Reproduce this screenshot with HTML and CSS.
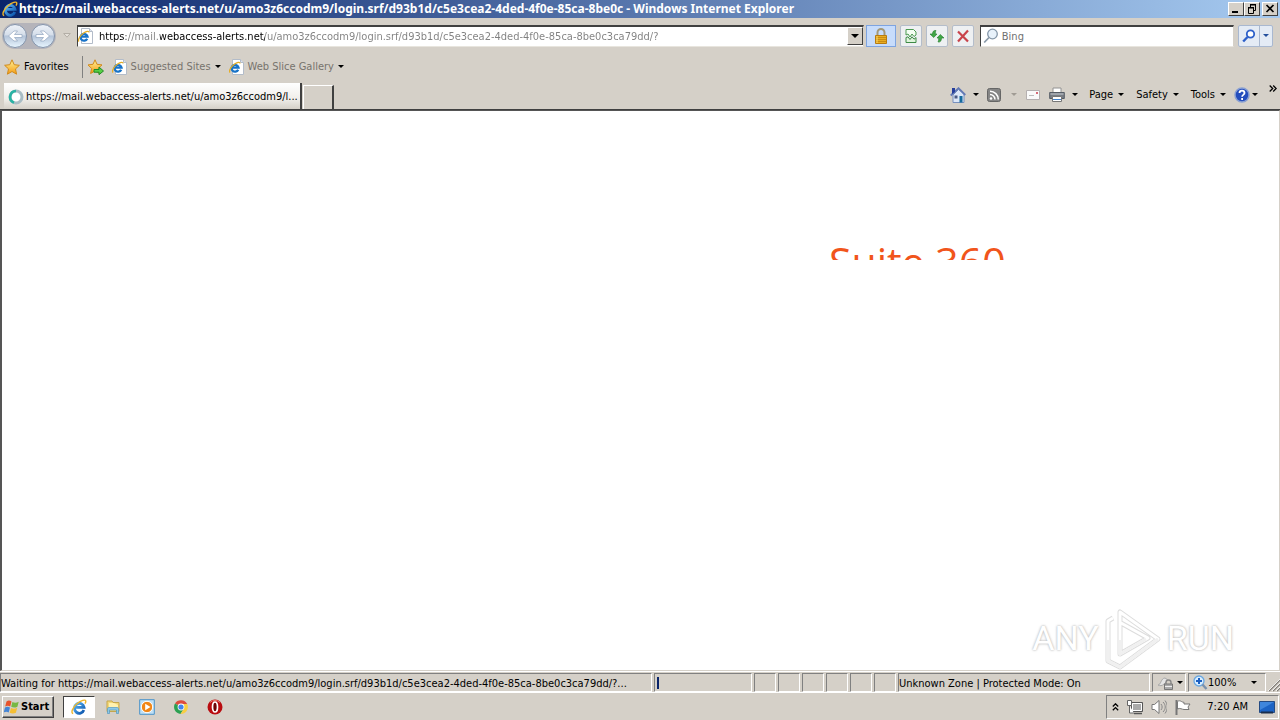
FILE: index.html
```html
<!DOCTYPE html>
<html lang="en">
<head>
<meta charset="utf-8">
<title>Windows Internet Explorer</title>
<link rel="stylesheet" href="styles.css">
</head>
<body>
<svg class="defs" width="0" height="0" aria-hidden="true">
  <defs>
    <linearGradient id="orb" x1="0" y1="0" x2="0" y2="1"><stop offset="0" stop-color="#eef2f8"/><stop offset=".45" stop-color="#d5deea"/><stop offset=".5" stop-color="#b4c4d9"/><stop offset="1" stop-color="#e8f6ff"/></linearGradient>
    <linearGradient id="gold" x1="0" y1="0" x2="0" y2="1"><stop offset="0" stop-color="#fff39a"/><stop offset="1" stop-color="#f59a10"/></linearGradient>
    <linearGradient id="blue" x1="0" y1="0" x2="1" y2="1"><stop offset="0" stop-color="#5cb8f4"/><stop offset="1" stop-color="#0b53ac"/></linearGradient>
    <symbol id="e" viewBox="0 0 16 16"><path d="M12.800 11A4.800 5 0 1 1 13 8.300H4.500" fill="none" stroke="url(#blue)" stroke-width="2.800"/><path d="M2.200 14.500C-.5 14 1.500 8.500 6 4.800 10 1.300 14.500.1 14.800 2c.1.900-.3 1.800-.8 2.600" fill="none" stroke="#efb52a" stroke-width="1.400"/></symbol>
    <symbol id="epage" viewBox="0 0 16 16"><path d="M3.500.5h8l3 3v12h-11z" fill="#fff" stroke="#b3bcc9"/><path d="M11.500.5v3h3" fill="#dde4ef" stroke="#b3bcc9"/><path d="M9.200 10.800A3.500 3.400 0 1 1 9.500 8.600H3" fill="none" stroke="#1873c8" stroke-width="2.300"/><path d="M1 13.500C-.5 12 2 7.500 5 5.500 8 3.200 11 2.500 11 4.500" fill="none" stroke="#e5ae27" stroke-width="1.300"/></symbol>
    <symbol id="star" viewBox="0 0 16 16"><path d="M8 .8l2.200 4.900 5.200.6-3.900 3.600 1.100 5.300L8 12.500l-4.600 2.700 1.100-5.300L.6 6.300l5.200-.6z" fill="url(#gold)" stroke="#d08a1c"/></symbol>
  </defs>
</svg>

<header class="titlebar">
  <svg class="i16"><use href="#e"/></svg>
  <h1>https://mail.webaccess-alerts.net/u/amo3z6ccodm9/login.srf/d93b1d/c5e3cea2-4ded-4f0e-85ca-8be0c - Windows Internet Explorer</h1>
  <div class="winbtns">
    <button aria-label="Minimize"><svg viewBox="0 0 14 12"><path d="M3 9h6" stroke="#000" stroke-width="2"/></svg></button>
    <button aria-label="Restore"><svg viewBox="0 0 14 12"><path d="M5 2h6M5 1.500h6M5.500 1v4M10.500 1v6.500H9M3 4.500h6M3.500 4v6.500h5V4M3 5h6" fill="none" stroke="#000"/></svg></button>
    <button class="close" aria-label="Close"><svg viewBox="0 0 14 12"><path d="M3.500 2l7 7M10.500 2l-7 7" stroke="#000" stroke-width="1.700"/></svg></button>
  </div>
</header>

<div class="addressrow">
  <div class="nav">
    <button aria-label="Back"><svg viewBox="0 0 26 26"><circle cx="13" cy="13" r="11.500" fill="url(#orb)" stroke="#8494ab"/><path d="M20 11.500h-7.500l3-3.500H12l-5.500 5 5.500 5h3.500l-3-3.500H20z" fill="#fff" stroke="#91a5bf" stroke-width=".7"/></svg></button>
    <button aria-label="Forward"><svg viewBox="0 0 26 26"><circle cx="13" cy="13" r="11.500" fill="url(#orb)" stroke="#8494ab"/><path d="M6 11.500h7.500l-3-3.500H14l5.500 5-5.500 5h-3.500l3-3.500H6z" fill="#fff" stroke="#91a5bf" stroke-width=".7"/></svg></button>
  </div>
  <button class="recent" aria-label="Recent pages"><svg viewBox="0 0 8 5"><path d="M.7.5h6.600L4 4.200z" fill="#e5e1da" stroke="#b3aea6"/></svg></button>
  <div class="field address">
    <svg class="i16"><use href="#epage"/></svg>
    <input class="url" type="text" aria-label="Address" value="https://mail.webaccess-alerts.net/u/amo3z6ccodm9/login.srf/d93b1d/c5e3cea2-4ded-4f0e-85ca-8be0c3ca79dd/?">
    <button class="drop" aria-label="Show addresses"><i class="arrow"></i></button>
  </div>
  <button class="lock" aria-label="Security report"><svg viewBox="0 0 18 18"><path d="M5.500 9V5.500a3.500 3.500 0 0 1 7 0V9" fill="none" stroke="#a39878" stroke-width="2"/><path d="M3.500 8.500h11v8h-11z" fill="#e9ad22" stroke="#b87b0e"/><path d="M4 10.500h10M4 12.500h10M4 14.500h10" stroke="#c98b12"/><path d="M5 9v7" stroke="#f9d96b"/></svg></button>
  <div class="tools">
    <button aria-label="Compatibility View"><svg viewBox="0 0 16 16"><path d="M3 7V1.500h7.500L13 4v3l-2 1.500L9 6 7 9 5 6z" fill="#f4fff2" stroke="#4a9a50"/><path d="M3 9.500v5h10v-5l-2 1.700L9 8.800 7 11.500 5 8.800z" fill="#dff5dc" stroke="#3d8a45"/></svg></button>
    <button aria-label="Refresh"><svg viewBox="0 0 16 16"><path d="M7 2.500C4.500 2 3.500 4 3.500 6H1l3.700 3.500L8 6H6.300c0-1.500 0-2.500.7-3.500z" fill="#42a747" stroke="#247a2c" stroke-width=".6"/><path d="M9 14c2.500.5 3.500-1.500 3.500-4H15l-3.700-3.500L8 10h1.700c0 1.700 0 3-.7 4z" fill="#42a747" stroke="#247a2c" stroke-width=".6"/></svg></button>
    <button aria-label="Stop"><svg viewBox="0 0 16 16"><path d="M3 3.500l10 10M13 2.500L3 13.500" stroke="#c9434b" stroke-width="2.200"/></svg></button>
  </div>
  <div class="field search">
    <svg class="i16" viewBox="0 0 16 16"><circle cx="9.500" cy="6" r="4.800" fill="#e8f2fb" stroke="#8597a9" stroke-width="1.300"/><path d="M6 9.500l-4.800 5" stroke="#8a99a8" stroke-width="1.800"/></svg>
    <input type="text" aria-label="Search" placeholder="Bing">
  </div>
  <div class="go">
    <button aria-label="Search the web"><svg viewBox="0 0 16 16"><circle cx="9.500" cy="6" r="3.700" fill="#fff" stroke="#2c5fc9" stroke-width="1.800"/><path d="M6.500 9l-4.300 4.500" stroke="#2c5fc9" stroke-width="2.400"/></svg></button>
    <button class="more" aria-label="Search options"><i class="arrow navy"></i></button>
  </div>
</div>

<nav class="favorites">
  <button class="fav"><svg class="i16"><use href="#star"/></svg>Favorites</button>
  <button class="addfav" aria-label="Add to Favorites Bar"><svg class="i16" viewBox="0 0 16 16"><path d="M7 .8l2 4.500 5 .6-3.700 3.400 1 5L7 12l-4.400 2.500 1-5L0 5.900l5-.6z" fill="url(#gold)" stroke="#d08a1c"/><path d="M6 10.500h5V8l4.500 4-4.500 3.700v-2.500H6z" fill="#57cf45" stroke="#238a27"/></svg></button>
  <button class="site"><svg class="i16"><use href="#epage"/></svg>Suggested Sites<i class="arrow"></i></button>
  <button class="site"><svg class="i16"><use href="#epage"/></svg>Web Slice Gallery<i class="arrow"></i></button>
</nav>

<div class="tabrow">
  <button class="tab"><svg class="i16" viewBox="0 0 16 16"><circle cx="8" cy="8" r="6" fill="#fff" stroke="#a8bcc4" stroke-width="3"/><path d="M8 2a6 6 0 0 0-2 11.600" fill="none" stroke="#29b3a4" stroke-width="2.600"/></svg><span>https://mail.webaccess-alerts.net/u/amo3z6ccodm9/l...</span></button>
  <button class="newtab" aria-label="New Tab"></button>
  <div class="commands">
    <button class="home" aria-label="Home"><svg class="i16" viewBox="0 0 16 16"><path d="M3 8v7.500h11V7L8.500 2.500z" fill="#dce7f8" stroke="#7890be"/><path d="M.7 8.500L8.500 1.200 15.300 8" fill="none" stroke="#6379b4" stroke-width="1.800"/><path d="M2 1h3v4l-3 2z" fill="#263f9c"/><path d="M4.500 8.500h3v3h-3z" fill="#4a5a85"/><path d="M9.500 9h3v6.500h-3z" fill="#156a9d"/></svg><i class="arrow"></i></button>
    <button class="feeds" aria-label="Feeds"><svg class="i16" viewBox="0 0 16 16"><rect x="1.500" y="1.500" width="13" height="13" rx="2" fill="#858585" stroke="#666"/><circle cx="5" cy="11.500" r="1.300" fill="#fff"/><path d="M4 7.500a5 5 0 0 1 5 5M4 4.200a8.300 8.300 0 0 1 8.300 8.300" fill="none" stroke="#fff" stroke-width="1.500"/></svg><i class="arrow dim"></i></button>
    <button class="mail" aria-label="Read mail"><svg class="i16" viewBox="0 0 16 16"><path d="M1.500 3.500h13v9h-13z" fill="#fafafa" stroke="#b5b0b0"/><path d="M11 5h2v2h-2z" fill="#d66b77"/><path d="M4 8.500h5" stroke="#bbb"/></svg></button>
    <button class="print" aria-label="Print"><svg class="i16" viewBox="0 0 16 16"><path d="M4 6V1h8v5" fill="#fff" stroke="#929292"/><path d="M.7 5.500h14.600v6H.7z" fill="#777d85" stroke="#555c65"/><path d="M1.500 7h13" stroke="#c9cdd1"/><path d="M3.500 9.500h9v5h-9z" fill="#fff" stroke="#777"/><path d="M4 12.500h8" stroke="#4183ce"/></svg><i class="arrow"></i></button>
    <button class="page">Page<i class="arrow"></i></button>
    <button class="safety">Safety<i class="arrow"></i></button>
    <button class="tool">Tools<i class="arrow"></i></button>
    <button class="help" aria-label="Help"><svg class="i16" viewBox="0 0 16 16"><circle cx="8" cy="8" r="7" fill="#254ebd" stroke="#8aa0d2" stroke-width="1.500"/><path d="M5.500 6c0-3.200 5-3.200 5 0 0 1.900-2.400 1.800-2.400 3.700M8.100 11v2" fill="none" stroke="#fff" stroke-width="1.800"/></svg><i class="arrow"></i></button>
    <button class="chevron" aria-label="More commands"><svg viewBox="0 0 8 7"><path d="M.7.5l3 3-3 3M4.200.5l3 3-3 3" fill="none" stroke="#000" stroke-width="1.300"/></svg></button>
  </div>
</div>

<main class="view">
  <div class="brand">Suite 360</div>
  <div class="watermark"><span>ANY</span><svg viewBox="0 0 58 64"><g fill="none" stroke-linejoin="round"><path id="mark" d="M9 12L4 15v40l12 6 38-28-38-27v42l28-16L17 17" stroke="#ddd" stroke-width="5"/><path d="M9 12L4 15v40l12 6 38-28-38-27v42l28-16L17 17" stroke="#fff" stroke-width="3"/><path d="M4 34v21l12 6 38-28M16 34v14l26-15" stroke="#f0f0f0" stroke-width="3"/></g></svg><span>RUN</span></div>
</main>

<footer class="status">
  <div class="cell wait">Waiting for https://mail.webaccess-alerts.net/u/amo3z6ccodm9/login.srf/d93b1d/c5e3cea2-4ded-4f0e-85ca-8be0c3ca79dd/?...</div>
  <div class="cell progress"><i></i></div>
  <div class="cell s"></div><div class="cell s"></div><div class="cell s"></div><div class="cell s"></div><div class="cell s"></div><div class="cell s"></div>
  <div class="cell zone">Unknown Zone | Protected Mode: On</div>
  <button class="cell filter" aria-label="Filtering"><svg class="i16" viewBox="0 0 16 16"><path d="M1 10c3 0 3-7 7-7l3 2-4 4c-2 2-4 2-6 1z" fill="#e5e5e5" stroke="#a8a8a8"/><path d="M9 9V7.500a2.500 2.500 0 0 1 5 0V9" fill="none" stroke="#888" stroke-width="1.400"/><path d="M7.500 9h8v5.500h-8z" fill="#aaa" stroke="#777"/><path d="M8 11.500h7" stroke="#eee"/></svg><i class="arrow"></i></button>
  <button class="cell zoom"><svg class="i16" viewBox="0 0 16 16"><circle cx="7" cy="6" r="5" fill="#d8edff" stroke="#6aa7e0" stroke-width="1.300"/><path d="M7 3v6M4 6h6" stroke="#1b5fc2" stroke-width="2"/><path d="M10.500 9.500l4 4.500" stroke="#7a91ad" stroke-width="2.400"/></svg>100%<i class="arrow"></i></button>
  <svg class="grip" viewBox="0 0 12 14"><path d="M1 13L12 2M5 13l7-7M9 13l3-3" stroke="#827e78" stroke-width="1.500"/><path d="M0 13L12 1M4 13l8-8M8 13l4-4" stroke="#fff" stroke-width=".8"/></svg>
</footer>

<div class="taskbar">
  <button class="start"><svg viewBox="0 0 16 16"><path d="M2.500 2.500c2-1.500 3.500-1 5 0l-1.300 5c-1.700-1-3.200-1-5 0z" fill="#e8532b"/><path d="M8.400 3c2 1 4 1 6.300-.3l-1.300 5c-2.300 1.200-4.300 1-6.200 0z" fill="#78b843"/><path d="M1 8.500c1.700-1.200 3.300-1 5 0l-1.300 5c-1.700-1-3.200-1-5 0z" fill="#4585d5"/><path d="M7 9c2 1 4 1 6.200-.2l-1.300 5c-2.300 1-4.200.9-6.200-.1z" fill="#f5bf34"/></svg>Start</button>
  <div class="apps">
    <button class="active" aria-label="Internet Explorer"><svg viewBox="0 0 16 16"><use href="#e"/></svg></button>
    <button aria-label="Explorer"><svg viewBox="0 0 16 16"><path d="M2 2h5l1 1.500h6v9H2z" fill="#f3d878" stroke="#c5a64d"/><path d="M4 4h5l4 2v3H4z" fill="#fff1af"/><path d="M2.500 14.500V10c0-1 .5-1.500 1.500-1.500h8c1 0 1.500.5 1.500 1.500v4.500h-2V11h-7v3.500z" fill="#8bc8e8" stroke="#5398c2" stroke-width=".7"/></svg></button>
    <button aria-label="Media Player"><svg viewBox="0 0 16 16"><path d="M.7.7h14.600v14.600H.7z" fill="#bfe0f6" stroke="#4c93c9"/><circle cx="8" cy="8" r="5.700" fill="#f18616" stroke="#fff"/><path d="M6.200 4.700L11.500 8l-5.300 3.300z" fill="#fff"/></svg></button>
    <button aria-label="Chrome"><svg viewBox="0 0 16 16"><path d="M8 8L2 4.500A7 7 0 0 1 14.200 5H8z" fill="#dd4b3e"/><path d="M8 8L2 4.500A7 7 0 0 0 7.500 15L11 9.500z" fill="#2ba052"/><path d="M8 5h6.200A7 7 0 0 1 7.500 15L11 9.500z" fill="#f8ce43"/><circle cx="8" cy="8" r="3.400" fill="#fff"/><circle cx="8" cy="8" r="2.600" fill="#4284ed"/></svg></button>
    <button aria-label="Opera"><svg viewBox="0 0 16 16"><circle cx="8" cy="8" r="7.500" fill="#b90c10"/><path d="M3 3.500A7 7 0 0 1 13 3.500" fill="none" stroke="#ed7469"/><ellipse cx="8" cy="8" rx="2.500" ry="5" fill="#6e0406" stroke="#fff" stroke-width="1.700"/></svg></button>
  </div>
  <div class="tray">
    <button class="hidden" aria-label="Show hidden icons"><svg viewBox="0 0 7 8"><path d="M.8 3.500l2.700-2.700 2.700 2.700M.8 7.300l2.700-2.700 2.700 2.700" fill="none" stroke="#000" stroke-width="1.300"/></svg></button>
    <button aria-label="Network"><svg viewBox="0 0 16 16"><path d="M4.500 3.500h11v9h-11z" fill="#b9b9b9" stroke="#555"/><path d="M5.500 4.500h9v7h-9z" fill="#aaa" stroke="#fff"/><path d="M7 14.500h8" stroke="#555" stroke-width="1.500"/><path d="M.5 1.500h4v5h-4zM2.500 6.500V14H7" fill="#fff" stroke="#666"/></svg></button>
    <button aria-label="Volume"><svg viewBox="0 0 16 16"><path d="M1 5.500h2.500L8 1.500v13l-4.500-4H1z" fill="#fff" stroke="#777"/><path d="M10 5c1.500 2 1.500 4 0 6M12 3c3 3 3 7 0 10M14 1.500c3 4 3 9 0 13" fill="none" stroke="#888"/></svg></button>
    <button aria-label="Action Center"><svg viewBox="0 0 16 16"><path d="M1.500 1v15" stroke="#777" stroke-width="2"/><path d="M2.500 2.500c3-2 4 1 6.500.8L9 5h6l-2 3 1 2.500H9c-2 0-4-2-6.500-.5z" fill="#fff" stroke="#777"/></svg></button>
    <time>7:20 AM</time>
    <button class="desk" aria-label="Show desktop"><svg viewBox="0 0 16 16"><path d="M.5 2.500h15v11H.5z" fill="#1c63c4" stroke="#244b83"/><path d="M1 3h14L1 11z" fill="#3f86dc"/><path d="M2 13.500h12" stroke="#1a2e4d" stroke-width="2"/></svg></button>
  </div>
</div>
</body>
</html>
```

FILE: styles.css
```css
* { box-sizing: border-box; }
body {
  margin: 0;
  height: 100vh;
  display: flex;
  flex-direction: column;
  overflow: hidden;
  background: #d5d0c8;
  color: #000;
  font: 11px/14px Tahoma, "DejaVu Sans Condensed", "DejaVu Sans", sans-serif;
}
button, input { font: inherit; color: inherit; border: 0; background: none; padding: 0; margin: 0; }
button { display: flex; align-items: center; white-space: nowrap; }
svg { display: block; flex: none; }
.defs { position: absolute; }
.i16 { width: 16px; height: 16px; }
.arrow { flex: none; border: 3px solid transparent; border-top-color: #000; border-bottom: 0; }
.arrow.navy { border-top-color: #234f9c; }
.arrow.dim { border-top-color: #a09b94; }

.titlebar { display: flex; align-items: center; height: 18px; padding: 0 2px; background: linear-gradient(90deg, #0a246a, #a6caf0); color: #fff; }
.titlebar h1 { flex: 1; margin: 0 0 0 1px; font: bold 12px/16px "Noto Sans", "Open Sans", sans-serif; white-space: nowrap; overflow: hidden; }
.winbtns { display: flex; }
.winbtns button { width: 16px; height: 14px; background: #d5d0c8; border: 1px solid; border-color: #fff #404040 #404040 #fff; }
.winbtns svg { width: 14px; height: 12px; }
.winbtns .close { margin-left: 2px; }

.addressrow { display: flex; align-items: center; height: 35px; padding: 0 7px 0 2px; }
.nav { display: flex; gap: 2px; border-radius: 14px; background: #b5b4ba; }
.nav svg { width: 26px; height: 26px; }
.recent { width: 21px; justify-content: center; }
.recent svg { width: 8px; height: 5px; }
.field { display: flex; align-items: center; height: 22px; padding: 0; background: #fff; border: 1px solid; border-color: #404040 #d5d0c8 #e8e5de #404040; border-top-width: 2px; }
.field input { flex: 1; min-width: 0; height: 18px; outline: 0; }
.address { flex: 1; }
.address .url {
  margin-left: 5px;
  background: linear-gradient(90deg, #000 27px, #808080 27px 61px, #000 61px 166px, #808080 166px);
  -webkit-background-clip: text;
  background-clip: text;
  -webkit-text-fill-color: transparent;
}
.drop { width: 16px; height: 18px; justify-content: center; background: #d5d0c8; border: 1px solid; border-color: #fff #404040 #404040 #fff; }
.drop .arrow { border-width: 4px 4px 0; }
.lock { width: 30px; height: 22px; margin: 0 4px 0 2px; justify-content: center; background: #c7dcfb; border: 1px solid #7ea4e0; }
.lock svg { width: 18px; height: 18px; }
.tools { display: flex; gap: 4px; margin-right: 6px; }
.tools button { width: 22px; height: 22px; justify-content: center; background: #eef0f2; border: 1px solid #b4bdca; border-radius: 2px; }
.tools svg, .go svg { width: 16px; height: 16px; }
.search { width: 20%; min-width: 120px; padding-left: 2px; }
.search input { margin-left: 3px; }
.search input::placeholder { color: #707070; opacity: 1; }
.go { display: flex; height: 22px; margin-left: 4px; background: #e4ebf5; border: 1px solid #a9b8d0; border-radius: 2px; }
.go button { width: 20px; justify-content: center; }
.go .more { width: 13px; border-left: 1px solid #a9b8d0; }

.favorites { display: flex; align-items: center; height: 27px; padding-left: 4px; }
.favorites button { gap: 4px; height: 22px; }
.favorites .addfav { margin-left: 13px; padding-left: 5px; border-left: 1px solid #808080; }
.favorites .site { margin-left: 8px; gap: 3px; color: #77736d; }
.favorites .site .arrow { margin-left: 1px; }

.tabrow { display: flex; height: 30px; padding: 3px 3px 0 4px; border-bottom: 1px solid #404040; }
.tab { width: 298px; height: 26px; padding: 2px 4px 0 4px; gap: 2px; background: linear-gradient(#fff, #f0eeea 60%, #d5d0c8); border-right: 2px solid #404040; }
.newtab { width: 31px; height: 24px; margin: 2px 0 0 1px; border: 1px solid #fff; border-right: 2px solid #404040; border-bottom: 0; }
.commands { display: flex; align-items: center; margin-left: auto; height: 23px; }
.commands button { height: 23px; }
.commands .arrow { margin-left: 5px; }
.home { margin-right: 7px; }
.home .arrow, .print .arrow { margin-left: 7px; }
.feeds .arrow { margin-left: 9px; }
.feeds { margin-right: 8px; }
.mail { margin-right: 8px; }
.print { margin-right: 11px; }
.page, .safety { margin-right: 12px; }
.tool { margin-right: 8px; }
.commands .help .arrow { margin-left: 2px; }
.chevron { margin-left: 11px; align-items: flex-start; padding-top: 2px; }
.chevron svg { width: 8px; height: 7px; }

.view { position: relative; flex: 1; min-height: 0; background: #fff; border: 1px solid #d5d0c8; border-left: 2px solid #555; border-top: 1px solid #555; overflow: hidden; }
.brand { height: 149px; margin-left: 827px; padding-top: 128px; overflow: hidden; color: #f1551b; font: 41px/44px "Open Sans", "Noto Sans", sans-serif; white-space: nowrap; }
.watermark { position: absolute; right: 45px; bottom: 0; display: flex; align-items: center; gap: 5px; color: #fff; font: 34px/44px Roboto, "Liberation Sans", sans-serif; text-shadow: 0 0 2px #bbb, 0 0 3px #ccc; }
.watermark svg { width: 58px; height: 64px; }

.status { display: flex; align-items: center; gap: 2px; height: 22px; padding: 1px 0 0; border-top: 1px solid #fff; border-bottom: 1px solid #fff; white-space: nowrap; }
.cell { height: 19px; line-height: 19px; border: 1px solid; border-color: #808080 #fff #fff #808080; }
.wait { flex: 1; min-width: 0; overflow: hidden; text-overflow: ellipsis; }
.progress { width: 98px; padding: 3px 2px; }
.progress i { display: block; width: 2px; height: 12px; background: #0a246a; }
.s { width: 22px; }
.zone { width: 252px; }
.filter { width: 34px; padding-left: 4px; gap: 4px; }
.zoom { width: 78px; padding-left: 3px; }
.zoom .arrow { margin-left: auto; margin-right: 8px; }
.grip { width: 12px; height: 14px; align-self: flex-end; }

.taskbar { display: flex; align-items: center; height: 27px; padding: 0 1px 0 2px; }
.start { width: 52px; height: 22px; gap: 1px; padding-left: 1px; font-weight: bold; border: 1px solid; border-color: #fff #404040 #404040 #fff; box-shadow: inset -1px -1px #808080; }
.start svg { width: 16px; height: 16px; }
.apps { display: flex; gap: 2px; margin-left: 9px; }
.apps button { width: 32px; height: 22px; justify-content: center; }
.apps svg, .tray svg { width: 16px; height: 16px; }
.apps .active { background: #fff; border: 1px solid; border-color: #404040 #fff #fff #404040; }
.tray { display: flex; align-items: center; gap: 8px; height: 24px; margin-left: auto; padding: 0 3px 0 5px; border: 1px solid; border-color: #808080 #fff #fff #808080; }
.tray .hidden svg { width: 7px; height: 8px; }
.tray time { margin-left: 8px; }
.tray .desk { margin-left: 3px; }
```
